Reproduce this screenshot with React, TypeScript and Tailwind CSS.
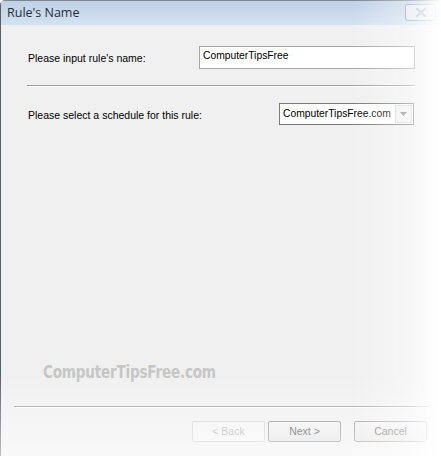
import React from "react";

export default function App() {
  const ui = { fontFamily: '"Liberation Sans", Arial, sans-serif' };
  return (
    <div className="relative w-[441px] h-[456px] overflow-hidden bg-white">
      <div className="w-[441px] h-[456px] flex flex-col bg-[#f0f0f0] border-l border-[#5b5f66] rounded-tl-[5px] border-t border-t-[#7c8591]">
        {/* Title bar */}
        <div className="h-[24px] shrink-0 flex items-center justify-between pl-[6px] pr-[5px] bg-gradient-to-b from-[#bfd1e6] to-[#d4e2f0]">
          <span className="text-[12.5px] text-[#22303f]" style={{ fontFamily: '"Open Sans", "Noto Sans", sans-serif' }}>Rule's Name</span>
          <div className="w-[31px] h-[17px] mb-[1px] rounded-[3px] border border-[#8f9cab] bg-[#dfe7f0] flex items-center justify-center">
            <svg width="12" height="9" viewBox="0 0 12 9">
              <path d="M2 1 L10 8 M10 1 L2 8" stroke="#9aa3ad" strokeWidth="2.2" strokeLinecap="round" />
            </svg>
          </div>
        </div>

        {/* Body */}
        <div className="flex-1 flex flex-col" style={ui}>
          <div className="flex items-center pl-[27px] pr-[26px] mt-[21px] h-[23px]">
            <span className="text-[10.5px] text-black mt-[3px]">Please input rule's name:</span>
            <div className="ml-auto w-[216px] h-[23px] border border-[#a6a6a6] bg-white pl-[3px] pt-[2px] text-[10.3px] text-black leading-[13px]">
              ComputerTipsFree
            </div>
          </div>

          <div className="ml-[26px] mr-[26px] mt-[16px] h-[2px] border-t border-[#a0a0a0] border-b border-b-white" />

          <div className="flex items-center pl-[27px] pr-[27px] mt-[16px] h-[22px]">
            <span className="text-[10.5px] text-black mt-[4px]">Please select a schedule for this rule:</span>
            <div className="ml-auto w-[135px] h-[22px] border border-[#7a7a7a] bg-white flex items-stretch">
              <div className="flex-1 pl-[3px] pt-[3px] text-[10.3px] text-black leading-[13px] whitespace-nowrap overflow-hidden">ComputerTipsFree.com</div>
              <div className="w-[17px] m-[1px] border border-[#d6d6d6] bg-[#f2f2f2] flex items-center justify-center">
                <svg width="7" height="4" viewBox="0 0 7 4">
                  <path d="M0 0 L7 0 L3.5 4 Z" fill="#8a8a8a" />
                </svg>
              </div>
            </div>
          </div>

          <div className="flex-1" />

          <div className="pl-[42px] mb-[21px]">
            <span
              className="inline-block origin-left scale-x-[0.755] text-[18px] font-bold text-[#c6c6c6] tracking-[-0.3px]"
              style={{ fontFamily: '"DejaVu Sans", sans-serif' }}
            >
              ComputerTipsFree.com
            </span>
          </div>

          <div className="ml-[13px] mr-[13px] h-[2px] border-t border-[#a0a0a0] border-b border-b-white" />

          <div className="flex justify-end gap-[3px] pr-[14px] mt-[13px] mb-[14px]">
            <button className="w-[73px] h-[21px] border border-[#d0d0d0] rounded-[2px] bg-[#f4f4f4] text-[10.5px] text-[#b0b0b0]">&lt; Back</button>
            <button className="w-[73px] h-[21px] border border-[#8e8e8e] rounded-[2px] bg-gradient-to-b from-[#f2f2f2] to-[#e0e0e0] text-[10.5px] text-[#444]">Next &gt;</button>
            <button className="ml-[10px] w-[73px] h-[21px] border border-[#8e8e8e] rounded-[2px] bg-gradient-to-b from-[#f2f2f2] to-[#e0e0e0] text-[10.5px] text-[#444]">Cancel</button>
          </div>
        </div>
      </div>

      {/* fade overlays */}
      <div className="pointer-events-none absolute inset-0 bg-gradient-to-r from-transparent from-[80%] via-white/40 via-[92%] to-white" />
      <div className="pointer-events-none absolute inset-0 bg-gradient-to-b from-transparent from-[82%] to-white/60" />
    </div>
  );
}
